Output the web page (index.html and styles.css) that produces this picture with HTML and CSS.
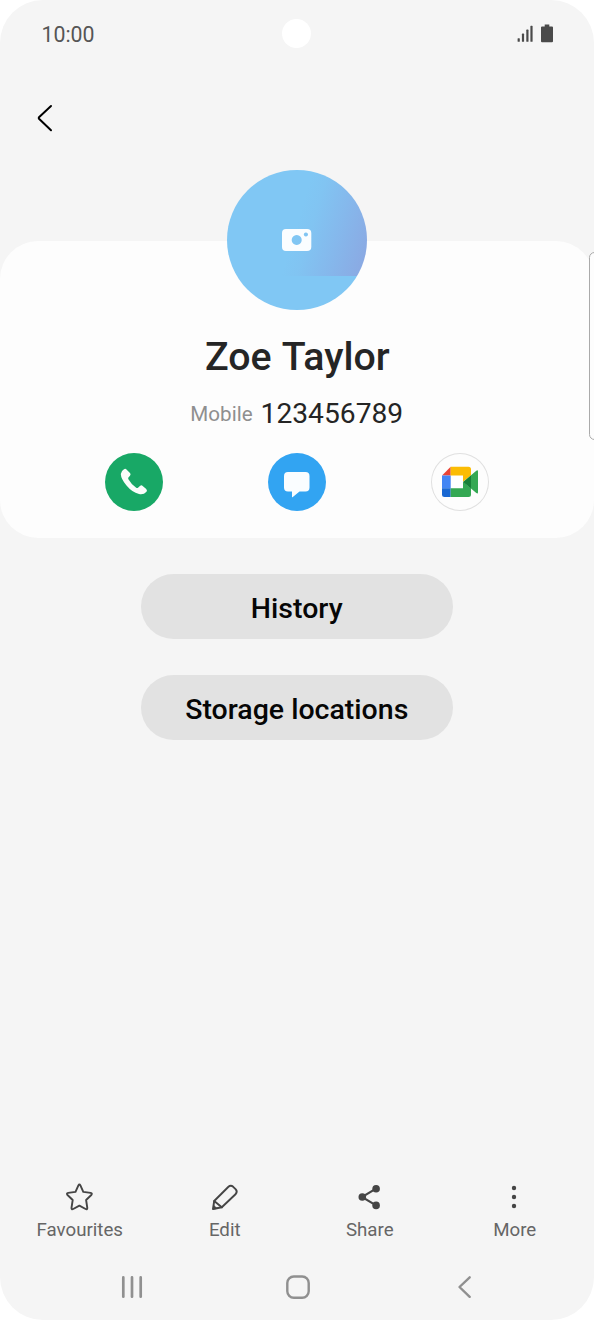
FILE: index.html
```html
<!DOCTYPE html>
<html lang="en">
<head>
<meta charset="utf-8">
<title>Zoe Taylor</title>
<link rel="stylesheet" href="styles.css">
</head>
<body>
<main class="screen">
  <header class="status">
    <span class="clock">10:00</span>
    <span class="camera-hole"></span>
    <svg class="status-icons" width="38" height="20" viewBox="0 0 38 20">
      <g fill="#4a4a4a">
        <rect x="1.6" y="14.2" width="2.2" height="3.6" rx=".6"/>
        <rect x="5.9" y="9.6" width="2.2" height="8.2" rx=".6"/>
        <rect x="10.3" y="5.6" width="2.2" height="12.2" rx=".6"/>
        <rect x="14.4" y="1.8" width="2.2" height="16" rx=".6"/>
        <path d="M28.7 .5h4.600v2h2.700q1 0 1 1v13.700q0 1-1 1H26q-1 0-1-1V3.500q0-1 1-1h2.700z"/>
      </g>
    </svg>
  </header>
  <nav class="toolbar">
    <svg width="18" height="30" viewBox="0 0 18 30" fill="none" stroke="#000" stroke-width="2" stroke-linecap="round" stroke-linejoin="round"><path d="M15 3 3 14.200Q2.400 15 3 15.800L15 27.300"/></svg>
  </nav>

  <section class="card">
    <div class="avatar">
      <svg width="30" height="22" viewBox="0 0 30 22">
        <path fill="#fafdff" fill-rule="evenodd" d="M4 0H25Q29.300 0 29.300 4V18Q29.300 22 25 22H4Q0 22 0 18V4Q0 0 4 0ZM14.700 6a5 5 0 1 0 .01 0ZM23.900 3.400a2.100 2.100 0 1 0 .01 0Z"/>
      </svg>
    </div>
    <h1 class="name">Zoe Taylor</h1>
    <p class="phone"><span class="kind">Mobile</span><span class="number">123456789</span></p>
    <div class="actions">
      <span class="action call">
        <svg width="58" height="58" viewBox="0 0 58 58"><path fill="#fafdfa" d="M19 16.200Q20.400 15.400 21.500 16.500L25 20.100Q26.200 21.400 25 22.700L23.400 24.500Q22.900 25.200 23.400 26.300Q26.500 31.800 31.200 34.700Q32.300 35.300 33 34.700L35.200 32.800Q36.500 31.900 37.700 32.900L41.200 36Q42.600 37.400 41.500 38.800Q38.500 42.100 34 41.100Q27 39.200 21.500 32.500Q16 26 15.800 21Q15.900 18 19 16.200Z"/></svg>
      </span>
      <span class="action message">
        <svg width="58" height="58" viewBox="0 0 58 58"><path fill="#fafdff" d="M20 19H37.500Q41.500 19 41.500 23V34.500Q41.500 38.500 37.500 38.500H31.500L24.500 44.300Q24 44.500 24 43.800V38.500H20Q16 38.500 16 34.500V23Q16 19 20 19Z"/></svg>
      </span>
      <span class="action meet">
        <svg width="58" height="58" viewBox="0 0 58 58">
          <g transform="translate(0 -.7)">
            <path fill="#fff" d="M19.700 23.200H32V36H19.700Z"/>
            <path fill="#ea4335" d="M11 23.200 19.700 14.500V23.200Z"/>
            <path fill="#4285f4" d="M11 23.200H19.700V36H11Z"/>
            <path fill="#1967d2" d="M11 36H19.700V44.800H13.500Q11 44.800 11 42.300Z"/>
            <path fill="#fbbc04" d="M19.700 14.500H37.500Q40 14.500 40 17V23L32 29.500V23.200H19.700Z"/>
            <path fill="#34a853" d="M19.700 36H32V29.500L40 36V42.300Q40 44.800 37.500 44.800H19.700ZM40 22.900 45.300 18.500Q47 17.300 47 19.300V40Q47 42 45.300 40.800L40 36.300Z"/>
            <path fill="#188038" d="M32 29.600 40 22.900V36.300Z"/>
          </g>
        </svg>
      </span>
    </div>
  </section>

  <section class="links">
    <button class="pill">History</button>
    <button class="pill">Storage locations</button>
  </section>

  <nav class="tabs">
    <span class="tab">
      <svg width="30" height="30" viewBox="0 0 30 30" fill="none" stroke="#454545" stroke-width="1.900" stroke-linejoin="round"><path d="M13.400 3.400Q14.400 1.600 15.400 3.400L18.300 9.900 25.600 10.900Q27.700 11.400 26.300 13L21.100 18 22.300 25.800Q22.400 27.800 20.600 27L14.400 23.700 8.200 27Q6.400 27.800 6.500 25.800L7.700 18 2.500 13Q1.100 11.400 3.200 10.900L10.500 9.900Z"/></svg>
      Favourites
    </span>
    <span class="tab">
      <svg width="30" height="30" viewBox="0 0 30 30" fill="none" stroke="#454545" stroke-width="1.900" stroke-linejoin="round" stroke-linecap="round"><path d="M3 27 4.200 19 18.200 5Q20.700 2.700 23.200 4.800L25.800 7.400Q27.800 9.700 25.500 12.300L11.800 25.300Z"/><path d="M4.200 19 11.800 25.300"/><path d="M3 27 3.700 23.300 6.800 26.200Z" fill="#454545" stroke-width=".6"/></svg>
      Edit
    </span>
    <span class="tab">
      <svg width="30" height="30" viewBox="0 0 30 30" fill="#454545"><path d="M21 6.600 7 15 21 23.400" fill="none" stroke="#454545" stroke-width="2.100"/><circle cx="21.100" cy="6.800" r="3.800"/><circle cx="7.300" cy="15" r="3.800"/><circle cx="21.100" cy="23.400" r="3.800"/></svg>
      Share
    </span>
    <span class="tab">
      <svg width="30" height="30" viewBox="0 0 30 30" fill="#454545"><circle cx="14" cy="6" r="2.200"/><circle cx="14" cy="15" r="2.200"/><circle cx="14" cy="24" r="2.200"/></svg>
      More
    </span>
  </nav>
  <nav class="system">
    <svg width="26" height="26" viewBox="0 0 26 26" stroke="#909090" stroke-width="2.700" stroke-linecap="round"><path d="M4.300 3.400V22.700M13 3.400V22.700M21.700 3.400V22.700"/></svg>
    <svg width="26" height="26" viewBox="0 0 26 26" fill="none" stroke="#909090" stroke-width="2.400"><rect x="2.300" y="2.500" width="21.400" height="21.200" rx="6.500"/></svg>
    <svg width="26" height="26" viewBox="0 0 26 26" fill="none" stroke="#909090" stroke-width="2.400" stroke-linecap="round" stroke-linejoin="round"><path d="M18.700 3.300 8.500 13 18.700 22.800"/></svg>
  </nav>
  <span class="edge-handle"></span>
</main>
</body>
</html>
```
FILE: styles.css
```css
* { box-sizing: border-box; }

body {
  margin: 0;
  background: #fff;
  font-family: Roboto, sans-serif;
}

.screen {
  position: relative;
  display: flex;
  flex-direction: column;
  width: 593.5px;
  height: 1320px;
  overflow: hidden;
  border-radius: 43px;
  background: #f5f5f5;
}

.status {
  display: grid;
  grid-template-columns: 1fr 29px 1fr;
  align-items: center;
  height: 68px;
  padding: 0 40px 0 41.5px;
}

.clock { font-size: 21.3px; color: #555; }

.camera-hole {
  width: 29px;
  height: 29px;
  margin: 0 0 1px -1px;
  border-radius: 50%;
  background: #fff;
}

.status-icons { justify-self: end; }

.toolbar {
  display: flex;
  align-items: center;
  height: 100px;
  padding-left: 36px;
}

.card {
  display: flex;
  flex-direction: column;
  align-items: center;
  height: 296.5px;
  margin-top: 73px;
  border-radius: 38px;
  background: #fdfdfd;
}

.avatar {
  display: grid;
  place-items: center;
  flex: none;
  width: 140.5px;
  height: 140.5px;
  margin-top: -71.3px;
  border-radius: 50%;
  background:
    linear-gradient(107deg, #80c7f4 50%, #81c4f2 59%, #85b8ec 76%, #8ba8e2 98%) 0 0 / 100% 106px no-repeat,
    #80c7f4;
}

.name {
  margin: 22px 0 0;
  padding-left: 1px;
  font-size: 39.3px;
  font-weight: 500;
  line-height: 50px;
  word-spacing: 1.5px;
  color: #252525;
}

.phone {
  display: flex;
  align-items: center;
  gap: 8px;
  margin: 12px 0 0;
  line-height: 40px;
}

.kind { margin-top: -1px; font-size: 20.6px; color: #8f8f8f; }
.number { font-size: 28.2px; color: #252525; }

.actions {
  display: flex;
  gap: 105px;
  margin-top: 18.5px;
}

.action {
  width: 58px;
  height: 58px;
  border-radius: 50%;
}

.action svg { display: block; }
.call { background: #18a866; }
.message { background: #32a4f2; }
.meet { box-shadow: inset 0 0 0 1px #e0e0e0; }

.links {
  display: flex;
  flex-direction: column;
  align-items: center;
  gap: 36px;
  margin-top: 36.5px;
}

.pill {
  width: 312px;
  height: 65px;
  padding: 3px 0 0;
  border: 0;
  border-radius: 33px;
  background: #e2e2e2;
  color: #060606;
  font: 500 28.5px Roboto, sans-serif;
}

.tabs {
  display: grid;
  grid-template-columns: repeat(4, 145px);
  justify-content: center;
  margin-top: auto;
}

.tab {
  display: flex;
  flex-direction: column;
  align-items: center;
  gap: 6px;
  padding-left: 1px;
  font-size: 18.7px;
  line-height: 24px;
  color: #666;
}

.system {
  display: flex;
  justify-content: space-between;
  height: 78px;
  padding: 32px 116.5px 0 119px;
}

.edge-handle {
  position: absolute;
  top: 252px;
  right: -6px;
  width: 11px;
  height: 188px;
  border: 1px solid #aaa;
  border-radius: 6px;
  background: #fdfdfd;
}
```
